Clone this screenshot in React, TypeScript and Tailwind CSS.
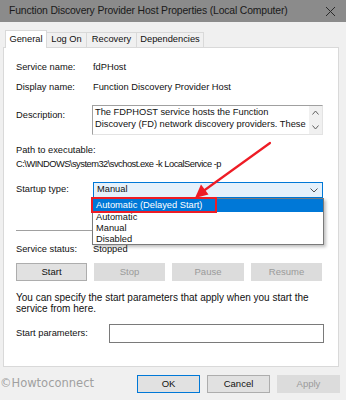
import React from 'react'

const font = { fontFamily: '"Liberation Sans", Arial, sans-serif' }

function Btn({ label, disabled, primary, w = 'w-[71px]' }: { label: string; disabled?: boolean; primary?: boolean; w?: string }) {
  return (
    <div
      className={`${w} h-[18px] flex items-center justify-center text-[9.5px] border ${
        disabled
          ? 'bg-[#dcdcdc] border-[#dcdcdc] text-[#9a9a9a]'
          : primary
          ? 'bg-[#e1e1e1] border-[#0078d7] text-[#111]'
          : 'bg-[#e1e1e1] border-[#adadad] text-[#111]'
      }`}
    >
      {label}
    </div>
  )
}

export default function App() {
  const tabs = [
    { name: 'Log On', w: 'w-[40px]' },
    { name: 'Recovery', w: 'w-[50px]' },
    { name: 'Dependencies', w: 'w-[67px]' },
  ]

  return (
    <div className="relative w-[346px] h-[400px] overflow-hidden bg-[#f0f0f0] text-[#111]" style={font}>
      {/* Title bar */}
      <div className="h-[22px] bg-[#8b8b8b] flex items-center justify-between pl-[9px] pr-[10px] text-[10.4px] tracking-[-0.15px] text-[#1a1a1a] whitespace-nowrap">
        <span>Function Discovery Provider Host Properties (Local Computer)</span>
        <svg width="11" height="11" viewBox="0 0 11 11">
          <path d="M1 1 L10 10 M10 1 L1 10" stroke="#2a2a2a" strokeWidth="1" />
        </svg>
      </div>

      {/* Tabs */}
      <div className="flex items-end pl-[5px] mt-[8px] h-[17px] text-[9.3px]">
        <div className="w-[42px] h-[18px] bg-white border border-b-0 border-[#d9d9d9] flex items-center justify-center relative z-10 -mb-px">
          General
        </div>
        {tabs.map((t) => (
          <div key={t.name} className={`${t.w} h-[15px] border border-l-0 border-b-0 border-[#d9d9d9] flex items-center justify-center bg-[#f0f0f0]`}>
            {t.name}
          </div>
        ))}
      </div>

      {/* Panel */}
      <div className="ml-[3px] w-[336px] h-[320px] bg-white border border-[#d9d9d9] pl-[12px] text-[9.3px]">
        <div className="mt-[13px] h-[14px] flex items-center">
          <span className="w-[77px]">Service name:</span>
          <span>fdPHost</span>
        </div>
        <div className="mt-[6px] h-[14px] flex items-center">
          <span className="w-[77px]">Display name:</span>
          <span>Function Discovery Provider Host</span>
        </div>
        <div className="mt-[10px] h-[30px] flex">
          <span className="w-[76px] pt-[4px]">Description:</span>
          <div className="w-[231px] h-[30px] flex border border-[#e3e3e3] border-t-[#a0a0a0] border-l-[#a0a0a0]">
            <div className="flex-1 pl-[2px] leading-[12px] overflow-hidden">
              The FDPHOST service hosts the Function Discovery (FD) network discovery providers. These
            </div>
            <div className="w-[13px] bg-[#f0f0f0] flex flex-col items-center justify-between py-[4px]">
              <svg width="7" height="5" viewBox="0 0 7 5"><path d="M0.5 4.5 L3.5 1 L6.5 4.5" stroke="#606060" fill="none" /></svg>
              <svg width="7" height="5" viewBox="0 0 7 5"><path d="M0.5 0.5 L3.5 4 L6.5 0.5" stroke="#606060" fill="none" /></svg>
            </div>
          </div>
        </div>
        <div className="mt-[9px] h-[14px] flex items-center">Path to executable:</div>
        <div className="h-[14px] flex items-center tracking-[-0.5px]">C:\WINDOWS\system32\svchost.exe -k LocalService -p</div>
        <div className="mt-[10px] h-[16px] flex items-center">
          <span className="w-[77px]">Startup type:</span>
          <div className="w-[230px] h-[16px] bg-[#e5f1fb] border border-[#0078d7] flex items-center justify-between pl-[3px] pr-[4px]">
            <span>Manual</span>
            <svg width="8" height="5" viewBox="0 0 8 5"><path d="M0.5 0.5 L4 4 L7.5 0.5" stroke="#505050" fill="none" /></svg>
          </div>
        </div>
        <div className="mt-[32px] h-px w-[307px] bg-[#a0a0a0]" />
        <div className="mt-[12px] h-[14px] flex items-center">
          <span className="w-[77px]">Service status:</span>
          <span>Stopped</span>
        </div>
        <div className="mt-[6px] flex gap-[7px]">
          <Btn label="Start" />
          <Btn label="Stop" disabled />
          <Btn label="Pause" disabled w="w-[72px]" />
          <Btn label="Resume" disabled />
        </div>
        <div className="mt-[11px] leading-[11px] w-[305px] text-[10px]">
          You can specify the start parameters that apply when you start the service from here.
        </div>
        <div className="mt-[10px] h-[19px] flex items-center">
          <span className="w-[93px]">Start parameters:</span>
          <div className="w-[215px] h-[19px] border border-[#7a7a7a] bg-white" />
        </div>
      </div>

      {/* Bottom row */}
      <div className="mt-[8px] flex items-center pr-[6px]">
        <span className="w-[137px] text-[11.5px] text-[#a0a0a0]" style={{ fontFamily: '"DejaVu Sans", sans-serif' }}>
          ©Howtoconnect
        </span>
        <div className="flex gap-[7px]">
          <Btn label="OK" primary w="w-[63px]" />
          <Btn label="Cancel" w="w-[63px]" />
          <Btn label="Apply" disabled w="w-[63px]" />
        </div>
      </div>

      {/* Open dropdown list */}
      <div className="absolute left-[92px] top-[198px] w-[232px] h-[47px] bg-white border border-[#7a7a7a] shadow-[2px_2px_3px_rgba(0,0,0,0.25)] text-[9.3px] leading-[11px]">
        <div className="h-[13px] bg-[#0078d7] text-white pl-[3px] flex items-center">Automatic (Delayed Start)</div>
        <div className="h-[11px] pl-[3px]">Automatic</div>
        <div className="h-[11px] pl-[3px]">Manual</div>
        <div className="h-[11px] pl-[3px]">Disabled</div>
      </div>
      <div className="absolute left-[91px] top-[197px] w-[126px] h-[16px] border-2 border-[#ee1c25]" />

      {/* Red arrow */}
      <svg className="absolute left-0 top-0" width="346" height="400">
        <line x1="270" y1="143" x2="202" y2="192" stroke="#ee1c25" strokeWidth="2.2" strokeLinecap="round" />
        <polygon points="195,198 208.5,194.5 201,184.5" fill="#ee1c25" />
      </svg>
    </div>
  )
}
